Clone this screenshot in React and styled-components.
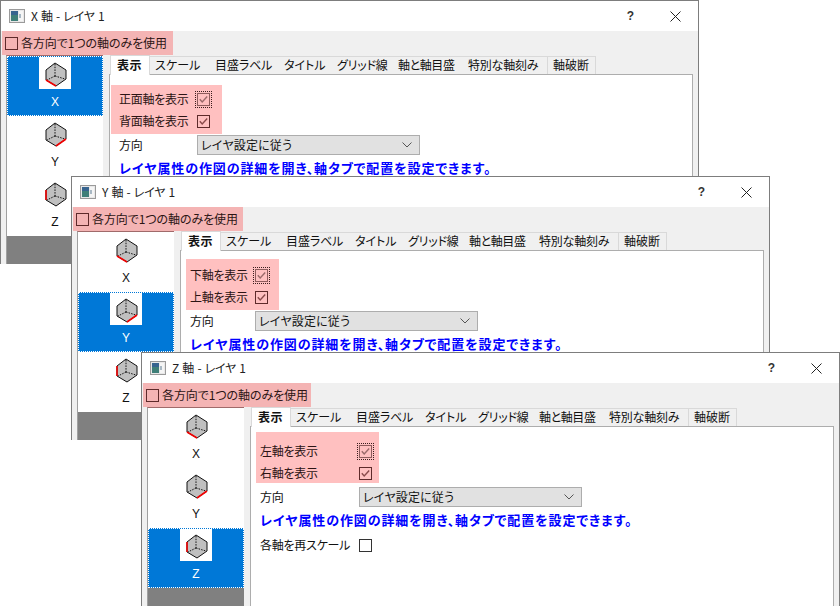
import React from "react";
import styled, { createGlobalStyle } from "styled-components";

const Global = createGlobalStyle`
  html, body { margin: 0; padding: 0; background: #fff; }
  body { font-family: "Noto Sans CJK JP", "Liberation Sans", sans-serif; font-size: 12px; color: #111; font-feature-settings: "palt"; }
`;

const Desktop = styled.div`
  position: relative;
  width: 840px;
  height: 606px;
  overflow: hidden;
  background: #fff;
`;

const Win = styled.section`
  position: absolute;
  left: ${(p) => p.$x}px;
  top: ${(p) => p.$y}px;
  width: 699px;
  height: 264px;
  box-sizing: border-box;
  border: 1px solid #7d7d7d;
  border-bottom: 0;
  background: #f0f0f0;
  display: flex;
  flex-direction: column;
  overflow: hidden;
`;

const TitleBar = styled.header`
  height: 30px;
  flex: none;
  background: #fff;
  display: flex;
  align-items: center;
  padding-left: 8px;
`;

const TitleText = styled.span`
  margin-left: 6px;
  padding-bottom: 1px;
  font-size: 12px;
  letter-spacing: -0.3px;
  word-spacing: 1px;
  color: #222;
  white-space: pre;
`;

const Help = styled.span`
  margin-left: auto;
  font: 700 12px "Liberation Sans", sans-serif;
  color: #333;
`;

const CloseBox = styled.span`
  display: flex;
  margin-left: 36px;
  margin-right: 17px;
`;

const TopPink = styled.label`
  flex: none;
  height: 24px;
  width: ${(p) => p.$w}px;
  margin-left: 1px;
  box-sizing: border-box;
  padding-left: 3px;
  display: flex;
  align-items: center;
  background: #f4b4b4;
  color: #2c1414;
  white-space: nowrap;
`;

const TopText = styled.span`
  margin-left: 3px;
  padding-bottom: 2px;
  letter-spacing: -0.08px;
`;

const Main = styled.div`
  flex: 1;
  display: flex;
  min-height: 0;
`;

const Sidebar = styled.ul`
  list-style: none;
  margin: 0 0 0 5px;
  padding: 0;
  width: 97px;
  box-sizing: border-box;
  flex: none;
  background: #808080;
  border-top: 1px solid #a06a6a;
  border-left: 1px solid #a0a0a0;
  display: flex;
  flex-direction: column;
`;

const Item = styled.li`
  height: 60px;
  flex: none;
  box-sizing: border-box;
  display: flex;
  flex-direction: column;
  align-items: center;
  background: ${(p) => (p.$on ? "#0078d7" : "#fff")};
  color: ${(p) => (p.$on ? "#fff" : "#111")};
  border: 1px dotted ${(p) => (p.$on ? "#fff" : "transparent")};
  font: 12px "Liberation Sans", sans-serif;
`;

const CubeBox = styled.span`
  display: flex;
  background: #fff;
  width: 32px;
  height: 32px;
`;

const ItemLabel = styled.span`
  margin-top: 5px;
  line-height: 16px;
`;

const Right = styled.div`
  flex: 1;
  margin-left: 6px;
  margin-right: 5px;
  display: flex;
  flex-direction: column;
  min-width: 0;
`;

const Tabs = styled.div`
  flex: none;
  height: 19px;
  display: flex;
  align-items: flex-end;
  padding-left: 1px;
  position: relative;
  z-index: 1;
`;

const Tab = styled.span`
  box-sizing: border-box;
  height: ${(p) => (p.$on ? 20 : 18)}px;
  width: ${(p) => p.$w}px;
  flex: none;
  display: flex;
  align-items: center;
  padding-left: ${(p) => (p.$on ? 6 : 5)}px;
  padding-bottom: 2px;
  background: ${(p) => (p.$on ? "#fff" : "#f0f0f0")};
  border-top: 1px solid #d9d9d9;
  border-left: ${(p) => (p.$on || p.$last ? "1px solid #d9d9d9" : "0")};
  border-right: ${(p) => (p.$on || p.$last ? "1px solid #d9d9d9" : "0")};
  font-weight: ${(p) => (p.$on ? 700 : 400)};
  letter-spacing: ${(p) => p.$ls}px;
  white-space: nowrap;
  margin-bottom: ${(p) => (p.$on ? -1 : 0)}px;
  position: relative;
`;

const Panel = styled.div`
  flex: 1;
  box-sizing: border-box;
  background: #fff;
  border: 1px solid #adadad;
  border-bottom: 0;
  padding-left: 9px;
`;

const CheckArea = styled.div`
  height: 60px;
  display: flow-root;
`;

const Pink = styled.div`
  box-sizing: border-box;
  margin-left: ${(p) => p.$off}px;
  margin-top: ${(p) => p.$mt}px;
  width: ${(p) => p.$w}px;
  height: ${(p) => p.$h}px;
  padding-top: ${(p) => p.$pt}px;
  padding-left: ${(p) => -p.$off}px;
  background: #ffc0c0;
`;

const Row = styled.div`
  height: 22px;
  display: flex;
  align-items: center;
  color: ${(p) => (p.$pink ? "#2c1414" : "#111")};
`;

const RowLabel = styled.span`
  width: ${(p) => p.$w}px;
  flex: none;
  padding-bottom: 1px;
  letter-spacing: -0.25px;
  white-space: nowrap;
`;

const Box = styled.span`
  width: 13px;
  height: 13px;
  box-sizing: border-box;
  flex: none;
  display: flex;
  border: 1px solid ${(p) => (p.$tone === "dark" ? "#333" : p.$focus ? "#8d5c5c" : "#5e2a2a")};
  outline: ${(p) => (p.$focus ? "1px dotted #3a1d1d" : "none")};
  outline-offset: 1px;
`;

const Select = styled.div`
  flex: none;
  width: 223px;
  height: 20px;
  box-sizing: border-box;
  border: 1px solid #adadad;
  background: #e1e1e1;
  padding: 0 7px 1px 3px;
  display: flex;
  align-items: center;
  justify-content: space-between;
  letter-spacing: 0.2px;
`;

const DirRow = styled.div`
  height: 20px;
  display: flex;
  align-items: center;
`;

const Note = styled.p`
  margin: 3px 0 0;
  height: 20px;
  line-height: 19px;
  color: #0000ff;
  font-weight: 700;
  font-size: 13px;
  letter-spacing: 0.9px;
  white-space: nowrap;
`;

const RescaleRow = styled(Row)`
  margin-top: 4px;
`;

const AppIcon = () => (
  <svg width="16" height="14" viewBox="0 0 16 14">
    <rect x="0.5" y="0.5" width="15" height="13" fill="#e8e8e8" stroke="#9a9a9a" />
    <rect x="2" y="2" width="7" height="10" fill="#3f7f78" />
    <rect x="2" y="2" width="7" height="4" fill="#37648f" />
    <rect x="10" y="2" width="4" height="10" fill="#f5f5f5" />
    <rect x="10" y="5" width="2" height="4" fill="#a8b8c4" />
  </svg>
);

const CloseIcon = () => (
  <svg width="11" height="11" viewBox="0 0 11 11">
    <path d="M0.5 0.5L10.5 10.5M10.5 0.5L0.5 10.5" stroke="#222" fill="none" />
  </svg>
);

const Chevron = () => (
  <svg width="10" height="6" viewBox="0 0 10 6">
    <path d="M0.5 0.5L5 5L9.5 0.5" stroke="#555" fill="none" />
  </svg>
);

const Tick = ({ color }) => (
  <svg width="11" height="11" viewBox="0 0 11 11">
    <path d="M1.8 5.2L4.2 8L9.2 2.5" stroke={color} strokeWidth="1.4" fill="none" />
  </svg>
);

const RED = {
  X: "M7 23L17 29",
  Y: "M17 29L27 22",
  Z: "M7 13L7 23",
};

const Cube = ({ axis }) => (
  <svg width="32" height="32" viewBox="0 0 32 32">
    <path d="M16 6L27 13V22L17 29L7 23V13Z" fill="#c0c0c0" stroke="#111" strokeWidth="1" />
    <path d="M16 7V19M16 19L8 23M16 19L26 22" stroke="#111" strokeWidth="1" strokeDasharray="1.5 1.2" fill="none" />
    <path d={RED[axis]} stroke="#f00000" strokeWidth="1.6" fill="none" />
  </svg>
);

const TABS = [
  { t: "スケール", w: 60, ls: 0.1 },
  { t: "目盛ラベル", w: 69, ls: -0.1 },
  { t: "タイトル", w: 53, ls: 0 },
  { t: "グリッド線", w: 61, ls: -0.2 },
  { t: "軸と軸目盛", w: 70, ls: -0.4 },
  { t: "特別な軸刻み", w: 84, ls: -0.2 },
  { t: "軸破断", w: 49, ls: 0, last: true },
];

const WINDOWS = [
  {
    axis: "X", x: 0, y: 0, labelW: 78, topW: 171, top: "正面軸を表示", bottom: "背面軸を表示",
    pink: { off: -8, mt: 10, w: 111, h: 49, pt: 3 },
  },
  {
    axis: "Y", x: 71, y: 176, labelW: 65, topW: 170, top: "下軸を表示", bottom: "上軸を表示",
    pink: { off: -4, mt: 8, w: 93, h: 51, pt: 5 },
  },
  {
    axis: "Z", x: 141, y: 352, labelW: 99, topW: 168, top: "左軸を表示", bottom: "右軸を表示", rescale: true,
    pink: { off: -4, mt: 5, w: 123, h: 51, pt: 8 },
  },
];

const Dialog = ({ d }) => (
  <Win $x={d.x} $y={d.y}>
    <TitleBar>
      <AppIcon />
      <TitleText>{`${d.axis} 軸 - レイヤ 1`}</TitleText>
      <Help>?</Help>
      <CloseBox><CloseIcon /></CloseBox>
    </TitleBar>
    <TopPink $w={d.topW}>
      <Box $tone="top" />
      <TopText>各方向で1つの軸のみを使用</TopText>
    </TopPink>
    <Main>
      <Sidebar>
        {["X", "Y", "Z"].map((a) => (
          <Item key={a} $on={a === d.axis}>
            <CubeBox><Cube axis={a} /></CubeBox>
            <ItemLabel>{a}</ItemLabel>
          </Item>
        ))}
      </Sidebar>
      <Right>
        <Tabs>
          <Tab $on $w={40} $ls={0.5}>表示</Tab>
          {TABS.map((t) => (
            <Tab key={t.t} $w={t.w} $ls={t.ls} $last={t.last}>{t.t}</Tab>
          ))}
        </Tabs>
        <Panel>
          <CheckArea>
            <Pink $off={d.pink.off} $mt={d.pink.mt} $w={d.pink.w} $h={d.pink.h} $pt={d.pink.pt}>
              <Row $pink>
                <RowLabel $w={d.labelW}>{d.top}</RowLabel>
                <Box $focus><Tick color="#9a6a6a" /></Box>
              </Row>
              <Row $pink>
                <RowLabel $w={d.labelW}>{d.bottom}</RowLabel>
                <Box><Tick color="#8a4a4a" /></Box>
              </Row>
            </Pink>
          </CheckArea>
          <DirRow>
            <RowLabel $w={d.labelW}>方向</RowLabel>
            <Select>
              <span>レイヤ設定に従う</span>
              <Chevron />
            </Select>
          </DirRow>
          <Note>レイヤ属性の作図の詳細を開き、軸タブで配置を設定できます。</Note>
          {d.rescale && (
            <RescaleRow>
              <RowLabel $w={d.labelW}>各軸を再スケール</RowLabel>
              <Box $tone="dark" />
            </RescaleRow>
          )}
        </Panel>
      </Right>
    </Main>
  </Win>
);

export default function App() {
  return (
    <>
      <Global />
      <Desktop>
        {WINDOWS.map((d) => (
          <Dialog key={d.axis} d={d} />
        ))}
      </Desktop>
    </>
  );
}
